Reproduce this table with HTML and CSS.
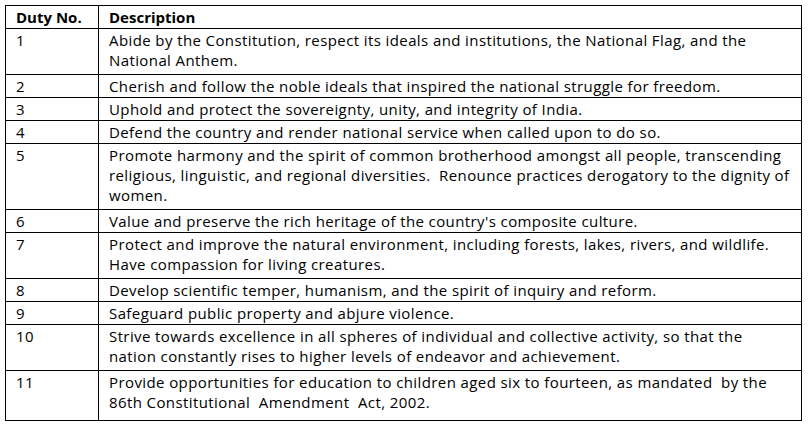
FILE: index.html
```html
<!DOCTYPE html>
<html lang="en">
<head>
<meta charset="utf-8">
<title>Fundamental Duties</title>
<link rel="stylesheet" href="styles.css">
</head>
<body>
<table class="duties">
  <thead>
    <tr class="one"><th class="no">Duty No.</th><th class="desc">Description</th></tr>
  </thead>
  <tbody>
    <tr class="two"><td>1</td><td>Abide by the Constitution, respect its ideals and institutions, the National Flag, and the<br>National Anthem.</td></tr>
    <tr class="one"><td>2</td><td>Cherish and follow the noble ideals that inspired the national struggle for freedom.</td></tr>
    <tr class="one"><td>3</td><td>Uphold and protect the sovereignty, unity, and integrity of India.</td></tr>
    <tr class="one"><td>4</td><td>Defend the country and render national service when called upon to do so.</td></tr>
    <tr class="three"><td>5</td><td>Promote harmony and the spirit of common brotherhood amongst all people, transcending<br>religious, linguistic, and regional diversities.&nbsp; Renounce practices derogatory to the dignity of<br>women.</td></tr>
    <tr class="one"><td>6</td><td>Value and preserve the rich heritage of the country's composite culture.</td></tr>
    <tr class="two"><td>7</td><td>Protect and improve the natural environment, including forests, lakes, rivers, and wildlife.<br>Have compassion for living creatures.</td></tr>
    <tr class="one"><td>8</td><td>Develop scientific temper, humanism, and the spirit of inquiry and reform.</td></tr>
    <tr class="one"><td>9</td><td>Safeguard public property and abjure violence.</td></tr>
    <tr class="two"><td>10</td><td>Strive towards excellence in all spheres of individual and collective activity, so that the<br>nation constantly rises to higher levels of endeavor and achievement.</td></tr>
    <tr class="two last"><td>11</td><td>Provide opportunities for education to children aged six to fourteen, as mandated&nbsp; by the<br>86th Constitutional&nbsp; Amendment&nbsp; Act, 2002.</td></tr>
  </tbody>
</table>
</body>
</html>
```
FILE: styles.css
```css
html, body {
  margin: 0;
  padding: 0;
  background: #ffffff;
}

body {
  padding: 5px 0 0 5px;
}

.duties {
  border-collapse: collapse;
  width: 797px;
  table-layout: fixed;
  font-family: "Open Sans", "Liberation Sans", sans-serif;
  font-size: 15px;
  letter-spacing: 0.4px;
  line-height: 20px;
  color: #000;
}

.duties th,
.duties td {
  border: 1px solid #000;
  padding: 1px 10px 0 10px;
  text-align: left;
  vertical-align: top;
  white-space: nowrap;
  box-sizing: content-box;
}

.duties th {
  font-weight: bold;
  letter-spacing: 0;
}

.duties .no {
  width: 72px;
}

.duties tr.one td,
.duties tr.one th {
  height: 21px;
}

.duties tr.two td {
  height: 44px;
}

.duties tr.three td {
  height: 64px;
}

.duties tr.last td {
  height: 48px;
}
```
